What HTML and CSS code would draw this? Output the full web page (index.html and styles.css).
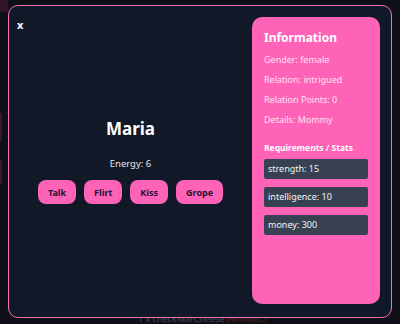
FILE: index.html
```html
<!DOCTYPE html>
<html lang="en">
<head>
<meta charset="UTF-8">
<meta name="viewport" content="width=device-width, initial-scale=1.0">
<title>Maria</title>
<link rel="stylesheet" href="styles.css">
</head>
<body>

<div id="page">
    <div class="side-tab"></div>
    <div class="side-mark mark-one"></div>
    <div class="side-mark mark-two"></div>
    <p class="log-line">1 x checkMarCheese <span class="log-hot">Hmmm..!</span></p>
</div>

<div id="overlay">
    <div class="modal">
        <span class="close-button">x</span>

        <div class="character">
            <h2 class="character-name">Maria</h2>
            <p class="energy">Energy: 6</p>
            <div class="actions">
                <button class="action-button">Talk</button>
                <button class="action-button">Flirt</button>
                <button class="action-button">Kiss</button>
                <button class="action-button">Grope</button>
            </div>
        </div>

        <div class="info-panel">
            <h3 class="info-title">Information</h3>
            <p class="info-line">Gender: female</p>
            <p class="info-line">Relation: intrigued</p>
            <p class="info-line">Relation Points: 0</p>
            <p class="info-line">Details: Mommy</p>

            <h4 class="stats-title">Requirements / Stats</h4>
            <ul class="stats-list">
                <li>strength: 15</li>
                <li>intelligence: 10</li>
                <li>money: 300</li>
            </ul>
        </div>
    </div>
</div>

</body>
</html>
```

FILE: styles.css
```css
body {
    font-family: "Noto Sans", "Open Sans", Arial, sans-serif;
    background-color: #1b1c26;
    color: #fff;
    margin: 0;
    padding: 0;
    width: 400px;
    height: 324px;
    overflow: hidden;
}

/* page behind the modal */
#page {
    position: relative;
    width: 100%;
    height: 100%;
}
.side-tab {
    position: absolute;
    left: 0;
    top: 0;
    width: 8px;
    height: 12px;
    background-color: #6b2550;
}
.side-mark {
    position: absolute;
    left: 0;
    width: 2px;
    background-color: #7a2d5a;
}
.mark-one {
    top: 113px;
    height: 28px;
}
.mark-two {
    top: 160px;
    height: 24px;
}
.log-line {
    position: absolute;
    left: 138px;
    top: 312px;
    margin: 0;
    font-size: 9px;
    color: #9ca3af;
}
.log-hot {
    color: #ef4444;
}

/* modal */
#overlay {
    position: fixed;
    left: 0;
    top: 0;
    width: 100%;
    height: 100%;
    background-color: rgba(8, 9, 14, 0.6);
    box-sizing: border-box;
    padding: 5px 8px 6px 8px;
    display: flex;
}
.modal {
    position: relative;
    flex: 1;
    display: flex;
    background-color: #111827;
    border: 1px solid #f472b6;
    border-radius: 10px;
    padding: 11px 11px 13px 0;
}
.close-button {
    position: absolute;
    top: 11px;
    left: 8px;
    font-size: 11px;
    font-weight: bold;
    color: #fff;
    cursor: pointer;
}

.character {
    flex: 1;
    display: flex;
    flex-direction: column;
    align-items: center;
    justify-content: center;
}
.character-name {
    margin: 0;
    font-size: 17px;
    font-weight: bold;
}
.energy {
    margin: 17px 0 10px 0;
    font-size: 9.5px;
    color: #e5e7eb;
}
.actions {
    display: flex;
    gap: 8px;
}
.action-button {
    font-family: inherit;
    height: 24px;
    padding: 0 10px;
    border: none;
    border-radius: 8px;
    background-color: #ff63b8;
    color: #1f1330;
    font-size: 9px;
    font-weight: bold;
    cursor: pointer;
}

.info-panel {
    width: 128px;
    box-sizing: border-box;
    padding: 12px;
    background-color: #ff63b8;
    border-radius: 10px;
}
.info-title {
    margin: 0 0 7px 0;
    font-size: 12px;
    font-weight: bold;
    color: #fff;
}
.info-line {
    margin: 0 0 8px 0;
    height: 12px;
    font-size: 9px;
    color: #fde4f1;
}
.stats-title {
    margin: 17px 0 6px 0;
    font-size: 8.5px;
    font-weight: bold;
    color: #fff;
}
.stats-list {
    list-style-type: none;
    margin: 0;
    padding: 0;
    display: flex;
    flex-direction: column;
    gap: 8px;
}
.stats-list li {
    height: 20px;
    line-height: 20px;
    padding: 0 4px;
    background-color: #374151;
    border-radius: 2px;
    font-size: 9px;
    color: #f3f4f6;
}
```
